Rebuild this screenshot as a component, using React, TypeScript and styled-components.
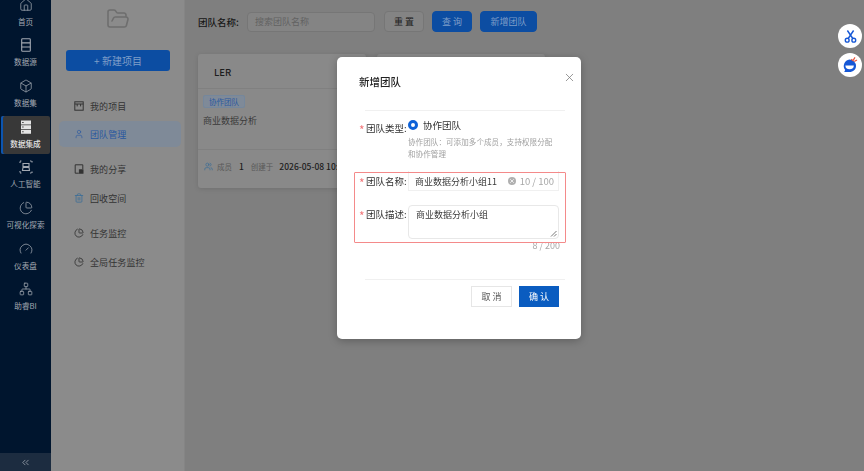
import styled, { createGlobalStyle } from "styled-components";
import { Box, ChartPie, Gauge, Home, Network, Trash2, User, Users, X, FolderOpen, ChevronsLeft } from "lucide-react";

const GlobalStyle = createGlobalStyle`
  html, body, #root { height: 100%; }
  body {
    margin: 0;
    overflow: hidden;
    background: #7f7f7f;
    font-family: "Noto Sans CJK SC", "Noto Sans", sans-serif;
  }
  * { box-sizing: border-box; }
`;

const Page = styled.div`
  display: flex;
  width: 864px;
  height: 471px;
  overflow: hidden;
`;

const Sidebar = styled.aside`
  width: 51px;
  flex: none;
  display: flex;
  flex-direction: column;
  background: #00152e;
  overflow: hidden;
`;

const NavList = styled.nav`
  flex: 1;
  margin-top: -6px;
  display: flex;
  flex-direction: column;
  gap: 2.7px;
`;

const NavItem = styled.div<{ $active?: boolean }>`
  height: 38px;
  margin: 0 1px;
  padding-bottom: 2px;
  display: flex;
  flex-direction: column;
  align-items: center;
  justify-content: center;
  gap: 5px;
  border-radius: 2px;
  font-size: 7.6px;
  font-weight: ${(p) => (p.$active ? 500 : 400)};
  line-height: 10px;
  white-space: nowrap;
  color: ${(p) => (p.$active ? "#e4e4e4" : "#a3a9b2")};
  background: ${(p) => (p.$active ? "#383838" : "transparent")};
  box-shadow: ${(p) => (p.$active ? "inset 2px 0 0 #0c55b0" : "none")};
`;

const Collapse = styled.div`
  height: 18px;
  display: flex;
  align-items: center;
  justify-content: center;
  background: #1c2c40;
  color: #8d96a2;
`;

const SidePanel = styled.section`
  width: 134px;
  flex: none;
  display: flex;
  flex-direction: column;
  background: #8b8b8b;
  border-right: 1px solid #858585;
`;

const FolderBox = styled.div`
  height: 50px;
  display: flex;
  justify-content: center;
  padding-top: 7px;
  color: #6e6e6e;
`;

const NewButton = styled.div`
  width: 104px;
  height: 21px;
  margin: 0 0 0 15px;
  display: flex;
  align-items: center;
  justify-content: center;
  border-radius: 3px;
  background: #0c4da2;
  color: #7f9ec8;
  font-size: 10px;
`;

const MenuList = styled.div`
  display: flex;
  flex-direction: column;
  margin-top: 22px;
`;

const MenuItem = styled.div<{ $active?: boolean; $gap?: number }>`
  height: 26px;
  margin: ${(p) => p.$gap ?? 0}px 3px 0 8px;
  padding-left: 15px;
  display: flex;
  align-items: center;
  gap: 6px;
  border-radius: 5px;
  font-size: 9px;
  letter-spacing: 0.1px;
  color: ${(p) => (p.$active ? "#2a58a0" : "#333333")};
  background: ${(p) => (p.$active ? "#7f8a98" : "transparent")};
`;

const Main = styled.main`
  flex: 1;
  padding: 11px 0 0 13px;
  background: #7f7f7f;
`;

const Toolbar = styled.div`
  display: flex;
  align-items: center;
  height: 21px;
`;

const FieldLabel = styled.span`
  width: 49px;
  font-size: 9.5px;
  font-weight: 500;
  color: #161616;
`;

const SearchBox = styled.div`
  width: 128px;
  height: 20px;
  margin-right: 9px;
  padding-left: 7px;
  display: flex;
  align-items: center;
  border: 1px solid #767676;
  border-radius: 4px;
  background: #848484;
  color: #626262;
  font-size: 9px;
`;

const ToolButton = styled.div<{ $primary?: boolean; $width: number }>`
  width: ${(p) => p.$width}px;
  height: 21px;
  margin-right: 8px;
  display: flex;
  align-items: center;
  justify-content: center;
  border-radius: 4px;
  font-size: 9px;
  white-space: pre;
  background: ${(p) => (p.$primary ? "#0c4da2" : "#848484")};
  color: ${(p) => (p.$primary ? "#7f9ec8" : "#1c1c1c")};
  border: 1px solid ${(p) => (p.$primary ? "#0c4da2" : "#767676")};
`;

const CardRow = styled.div`
  display: flex;
  gap: 11px;
  margin-top: 22px;
`;

const Card = styled.article`
  width: 168px;
  height: 134px;
  border-radius: 3px;
  background: #898989;
  box-shadow: 0 1px 5px rgba(0, 0, 0, 0.12);
  overflow: hidden;
`;

const CardTitle = styled.div`
  height: 35px;
  padding: 11px 0 0 16px;
  border-bottom: 1px solid #808080;
  font-size: 9.5px;
  line-height: 15px;
  font-weight: 500;
  color: #1d1d1d;
`;

const CardBody = styled.div`
  height: 61px;
  padding: 6px 5px 0;
  border-bottom: 1px solid #808080;
`;

const TeamTag = styled.div`
  display: flex;
  align-items: center;
  width: fit-content;
  height: 13px;
  padding: 0 5px;
  border: 1px solid #75879c;
  border-radius: 2px;
  background: #7f8a98;
  color: #2a58a0;
  font-size: 7.5px;
`;

const CardText = styled.div`
  margin-top: 6px;
  font-size: 9px;
  line-height: 14px;
  color: #3a3a3a;
`;

const CardFooter = styled.div`
  display: flex;
  align-items: center;
  height: 32px;
  padding-left: 6px;
  font-size: 7.5px;
  white-space: nowrap;
  color: #585858;
`;

const FooterValue = styled.span<{ $left: number }>`
  margin-left: ${(p) => p.$left}px;
  font-size: 8.5px;
  font-weight: 500;
  color: #1d1d1d;
`;

const FooterMuted = styled.span<{ $left: number }>`
  margin-left: ${(p) => p.$left}px;
`;

const ModalLayer = styled.div`
  position: fixed;
  inset: 0;
  padding: 57px 0 0 337px;
`;

const Modal = styled.div`
  position: relative;
  width: 244px;
  height: 282px;
  padding: 0 22px;
  border-radius: 5px;
  background: #ffffff;
  box-shadow: 0 2px 8px rgba(0, 0, 0, 0.25);
`;

const ModalTitle = styled.h2`
  margin: 0;
  padding-top: 17px;
  height: 53px;
  font-size: 10.5px;
  line-height: 15px;
  font-weight: 500;
  color: #222222;
`;

const CloseButton = styled.span`
  position: absolute;
  top: 14px;
  right: 5px;
  display: flex;
  color: #7a7a7a;
`;

const Divider = styled.div<{ $top?: number }>`
  height: 1px;
  margin: ${(p) => p.$top ?? 0}px -6px 0 6px;
  background: #f0f0f0;
`;

const FormRow = styled.div<{ $top: number }>`
  display: grid;
  grid-template-columns: 49px 151px;
  margin-top: ${(p) => p.$top}px;
`;

const RowLabel = styled.label<{ $top?: number }>`
  display: flex;
  align-items: flex-start;
  padding-top: ${(p) => p.$top ?? 3}px;
  font-size: 9.5px;
  line-height: 14px;
  color: #333333;
  white-space: nowrap;
  &::before {
    content: "*";
    width: 7px;
    color: #f2797c;
    font-size: 12px;
    line-height: 18px;
  }
`;

const RadioLine = styled.div`
  display: flex;
  align-items: center;
  gap: 5px;
  height: 13px;
  font-size: 9.5px;
  color: #333333;
`;

const RadioDot = styled.span`
  width: 10px;
  height: 10px;
  border-radius: 50%;
  border: 3px solid #0e62d8;
  background: #ffffff;
`;

const HelpText = styled.p`
  margin: 5px 0 0;
  font-size: 7.5px;
  line-height: 11.5px;
  letter-spacing: 0.1px;
  color: #a0a0a0;
`;

const NameInput = styled.div`
  height: 20px;
  padding: 1px 4px 0 6px;
  display: flex;
  align-items: center;
  border: 1px solid #f0f0f0;
  border-top: none;
  font-size: 9px;
  color: #3a3a3a;
`;

const ClearIcon = styled.span`
  display: flex;
  margin: 0 4px 0 auto;
  width: 8px;
  height: 8px;
  align-items: center;
  justify-content: center;
  border-radius: 50%;
  background: #b0b0b0;
  color: #ffffff;
`;

const InputCount = styled.span`
  font-size: 9.5px;
  color: #a8a8a8;
`;

const TextArea = styled.div`
  position: relative;
  height: 34px;
  padding: 2px 7px;
  border: 1px solid #e8e8e8;
  border-radius: 4px;
  font-size: 9px;
  line-height: 14px;
  color: #3a3a3a;
`;

const ResizeGrip = styled.svg`
  position: absolute;
  right: 1px;
  bottom: 1px;
`;

const TextCount = styled.div`
  height: 14px;
  margin-right: -1px;
  text-align: right;
  font-size: 9px;
  line-height: 14px;
  color: #a8a8a8;
`;

const ModalFooter = styled.div`
  display: flex;
  justify-content: flex-end;
  gap: 7px;
  margin: 6px 0 0;
`;

const FooterButton = styled.div<{ $primary?: boolean }>`
  width: ${(p) => (p.$primary ? 40 : 41)}px;
  height: 21px;
  display: flex;
  align-items: center;
  justify-content: center;
  font-size: 9px;
  white-space: pre;
  background: ${(p) => (p.$primary ? "#0a5cc0" : "#ffffff")};
  color: ${(p) => (p.$primary ? "#ffffff" : "#555555")};
  border: 1px solid ${(p) => (p.$primary ? "#0a5cc0" : "#e6e6e6")};
`;

const RedFrame = styled.div`
  position: absolute;
  left: 17px;
  top: 115px;
  width: 212px;
  height: 71px;
  border: 1px solid #f48a8a;
  border-radius: 1px;
  pointer-events: none;
`;

const FloatButton = styled.div<{ $top: number }>`
  position: fixed;
  top: ${(p) => p.$top}px;
  left: 838px;
  width: 24px;
  height: 24px;
  display: flex;
  align-items: center;
  justify-content: center;
  border-radius: 50%;
  background: #ffffff;
  color: #1557d6;
`;

const RowsIcon = () => (
  <svg width="14" height="14" viewBox="0 0 14 14" fill="none" stroke="currentColor" strokeWidth="1.1">
    <rect x="2.7" y="0.8" width="8.6" height="12.4" rx="0.8" />
    <path d="M2.7 4.9h8.6M2.7 9h8.6" />
  </svg>
);

const StackIcon = () => (
  <svg width="14" height="14" viewBox="0 0 14 14">
    <path fill="currentColor" d="M2 .5h10v4H2zM2 5.2h10v3.9H2zM2 9.8h10v3.9H2z" />
    <path fill="#383838" d="M3.2 2h1.4v1H3.2zM3.2 6.6h1.4v1H3.2zM3.2 11.2h1.4v1H3.2z" />
  </svg>
);

const ScanIcon = () => (
  <svg width="14" height="14" viewBox="0 0 14 14" fill="none" stroke="currentColor" strokeWidth="1.1">
    <path d="M1 3V1h2M11 1h2v2M1 11v2h2M11 13h2v-2" strokeDasharray="1.4 0.6" />
    <path d="M4 3.5h6v3H4zM4 7.5h6l.5 3h-7z" />
  </svg>
);

const BoardIcon = () => (
  <svg width="10" height="10" viewBox="0 0 10 10" fill="none" stroke="currentColor" strokeWidth="1">
    <rect x="0.8" y="0.8" width="8.4" height="8.4" />
    <path d="M0.8 3h8.4M3.2 3v2.4M6.6 3v2.4" />
  </svg>
);

const ShareIcon = () => (
  <svg width="10" height="10" viewBox="0 0 10 10" fill="none" stroke="currentColor" strokeWidth="1">
    <path d="M8.8 5V.8H1.2v8.4h3.6" />
    <rect x="5.4" y="5.8" width="3.6" height="3.4" fill="currentColor" />
  </svg>
);

const ScissorsIcon = () => (
  <svg width="15" height="15" viewBox="0 0 15 15" fill="none" stroke="currentColor" strokeWidth="1.4">
    <circle cx="4.2" cy="11.2" r="1.9" />
    <circle cx="10.8" cy="11.2" r="1.9" />
    <path d="M5.2 9.5 10.6 1.5M9.8 9.5 4.4 1.5" />
  </svg>
);

const RobotIcon = () => (
  <svg width="18" height="18" viewBox="0 0 18 18">
    <path fill="#1557d6" d="M8.5 3.5a6.5 6.5 0 0 1 6.5 6.5c0 3.6-2.9 6-6.5 6H3.2l1-2A6.5 6.5 0 0 1 8.5 3.5Z" />
    <path fill="#ffffff" d="M4.4 9.5h8.4a4.2 3.8 0 0 1-8.4 0Z" />
    <path d="M10.2 3.2 12 4.6 14 1.4M13.2 5.6 16 4" fill="none" stroke="#e8553f" strokeWidth="1.2" />
  </svg>
);

const navItems = [
  { label: "首页", icon: <Home size={14} strokeWidth={1.3} /> },
  { label: "数据源", icon: <RowsIcon /> },
  { label: "数据集", icon: <Box size={14} strokeWidth={1.3} /> },
  { label: "数据集成", icon: <StackIcon />, active: true },
  { label: "人工智能", icon: <ScanIcon /> },
  { label: "可视化探索", icon: <ChartPie size={14} strokeWidth={1.3} /> },
  { label: "仪表盘", icon: <Gauge size={14} strokeWidth={1.3} /> },
  { label: "助睿BI", icon: <Network size={14} strokeWidth={1.3} /> },
];

const menuItems = [
  { label: "我的项目", icon: <BoardIcon />, gap: 0 },
  { label: "团队管理", icon: <User size={10} strokeWidth={1.5} />, active: true, gap: 2 },
  { label: "我的分享", icon: <ShareIcon />, gap: 9 },
  { label: "回收空间", icon: <Trash2 size={10} color="#3f6f96" />, gap: 3 },
  { label: "任务监控", icon: <ChartPie size={10} />, gap: 9 },
  { label: "全局任务监控", icon: <ChartPie size={10} />, gap: 3 },
];

export default function App() {
  return (
    <>
      <GlobalStyle />
      <Page>
        <Sidebar>
          <NavList>
            {navItems.map((item) => (
              <NavItem key={item.label} $active={item.active}>
                {item.icon}
                {item.label}
              </NavItem>
            ))}
          </NavList>
          <Collapse>
            <ChevronsLeft size={11} />
          </Collapse>
        </Sidebar>

        <SidePanel>
          <FolderBox>
            <FolderOpen size={24} strokeWidth={1.6} />
          </FolderBox>
          <NewButton>+ 新建项目</NewButton>
          <MenuList>
            {menuItems.map((item) => (
              <MenuItem key={item.label} $active={item.active} $gap={item.gap}>
                {item.icon}
                {item.label}
              </MenuItem>
            ))}
          </MenuList>
        </SidePanel>

        <Main>
          <Toolbar>
            <FieldLabel>团队名称:</FieldLabel>
            <SearchBox>搜索团队名称</SearchBox>
            <ToolButton $width={40}>重 置</ToolButton>
            <ToolButton $primary $width={40}>查 询</ToolButton>
            <ToolButton $primary $width={57}>新增团队</ToolButton>
          </Toolbar>
          <CardRow>
            <Card>
              <CardTitle>LER</CardTitle>
              <CardBody>
                <TeamTag>协作团队</TeamTag>
                <CardText>商业数据分析</CardText>
              </CardBody>
              <CardFooter>
                <Users size={9} color="#3f6f96" />
                <FooterMuted $left={4}>成员</FooterMuted>
                <FooterValue $left={7}>1</FooterValue>
                <FooterMuted $left={7}>创建于</FooterMuted>
                <FooterValue $left={6}>2026-05-08 10:20</FooterValue>
              </CardFooter>
            </Card>
            <Card />
          </CardRow>
        </Main>
      </Page>

      <ModalLayer>
        <Modal>
          <ModalTitle>新增团队</ModalTitle>
          <CloseButton>
            <X size={13} strokeWidth={1.4} />
          </CloseButton>
          <Divider />
          <FormRow $top={7}>
            <RowLabel>团队类型:</RowLabel>
            <div>
              <RadioLine>
                <RadioDot />
                协作团队
              </RadioLine>
              <HelpText>
                协作团队：可添加多个成员，支持权限分配
                <br />
                和协作管理
              </HelpText>
            </div>
          </FormRow>
          <FormRow $top={12}>
            <RowLabel>团队名称:</RowLabel>
            <NameInput>
              商业数据分析小组11
              <ClearIcon>
                <X size={6} strokeWidth={3} />
              </ClearIcon>
              <InputCount>10 / 100</InputCount>
            </NameInput>
          </FormRow>
          <FormRow $top={13}>
            <RowLabel $top={2}>团队描述:</RowLabel>
            <TextArea>
              商业数据分析小组
              <ResizeGrip width="7" height="7" viewBox="0 0 7 7">
                <path d="M1 6.5 6.5 1M4 6.5 6.5 4" stroke="#555" strokeWidth="0.8" />
              </ResizeGrip>
            </TextArea>
          </FormRow>
          <TextCount>8 / 200</TextCount>
          <Divider $top={26} />
          <ModalFooter>
            <FooterButton>取 消</FooterButton>
            <FooterButton $primary>确 认</FooterButton>
          </ModalFooter>
          <RedFrame />
        </Modal>
      </ModalLayer>

      <FloatButton $top={24}>
        <ScissorsIcon />
      </FloatButton>
      <FloatButton $top={53}>
        <RobotIcon />
      </FloatButton>
    </>
  );
}
